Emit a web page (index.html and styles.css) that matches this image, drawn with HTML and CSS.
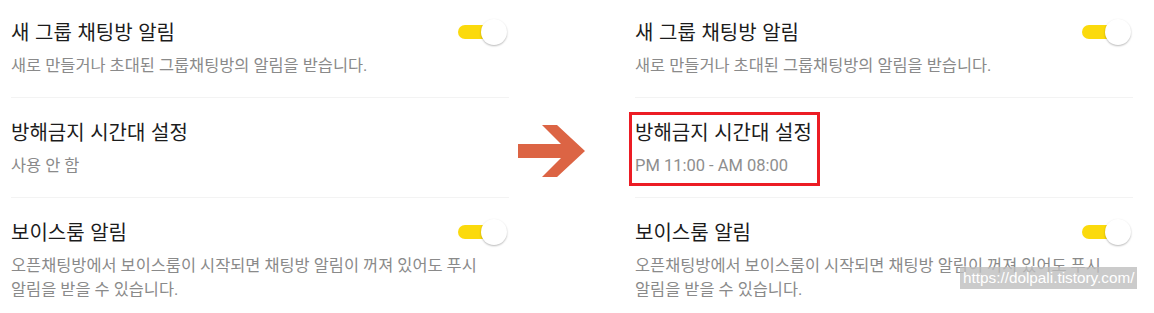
FILE: index.html
```
<!DOCTYPE html>
<html lang="ko">
<head>
    <meta charset="UTF-8">
    <meta name="viewport" content="width=device-width, initial-scale=1.0">
    <title>알림 설정</title>
    <link rel="stylesheet" href="styles.css">
</head>
<body>
    <div class="page">
        <!-- before -->
        <div class="panel">
            <div class="item">
                <div class="item-head">
                    <div class="item-title">새 그룹 채팅방 알림</div>
                    <div class="toggle"><span class="track"></span><span class="knob"></span></div>
                </div>
                <div class="item-desc">새로 만들거나 초대된 그룹채팅방의 알림을 받습니다.</div>
            </div>
            <div class="item">
                <div class="item-head">
                    <div class="item-title">방해금지 시간대 설정</div>
                </div>
                <div class="item-desc">사용 안 함</div>
            </div>
            <div class="item">
                <div class="item-head">
                    <div class="item-title">보이스룸 알림</div>
                    <div class="toggle"><span class="track"></span><span class="knob"></span></div>
                </div>
                <div class="item-desc">오픈채팅방에서 보이스룸이 시작되면 채팅방 알림이 꺼져 있어도 푸시<br>알림을 받을 수 있습니다.</div>
            </div>
        </div>

        <div class="arrow-col">
            <svg class="arrow" width="68" height="54" viewBox="0 0 68 54">
                <polygon fill="#dc6444" points="0,19 43,19 24,0 39,0 67,26 39,52 24,52 43,33 0,33"/>
            </svg>
        </div>

        <!-- after -->
        <div class="panel">
            <div class="item">
                <div class="item-head">
                    <div class="item-title">새 그룹 채팅방 알림</div>
                    <div class="toggle"><span class="track"></span><span class="knob"></span></div>
                </div>
                <div class="item-desc">새로 만들거나 초대된 그룹채팅방의 알림을 받습니다.</div>
            </div>
            <div class="item marked">
                <div class="item-head">
                    <div class="item-title">방해금지 시간대 설정</div>
                </div>
                <div class="item-desc">PM 11:00 - AM 08:00</div>
                <div class="highlight"></div>
            </div>
            <div class="item">
                <div class="item-head">
                    <div class="item-title">보이스룸 알림</div>
                    <div class="toggle"><span class="track"></span><span class="knob"></span></div>
                </div>
                <div class="item-desc">오픈채팅방에서 보이스룸이 시작되면 채팅방 알림이 꺼져 있어도 푸시<br>알림을 받을 수 있습니다.</div>
            </div>
        </div>
    </div>

    <div class="watermark">https://dolpali.tistory.com/</div>
</body>
</html>
```

FILE: styles.css
```
body {
    margin: 0;
    padding: 0;
    background-color: white;
    font-family: Roboto, 'Noto Sans CJK KR', sans-serif;
    overflow: hidden;
}
.page {
    display: flex;
    align-items: flex-start;
    padding-left: 11px;
}
.panel {
    width: 498px;
    flex-shrink: 0;
}
.item {
    position: relative;
    padding: 20px 0 19px;
    border-bottom: 1px solid #f3f3f3;
}
.item:first-child {
    padding-top: 18px;
}
.item:last-child {
    border-bottom: none;
}
.item-head {
    display: flex;
    justify-content: space-between;
    align-items: center;
    height: 28px;
}
.item-title {
    font-family: 'Noto Sans CJK KR', sans-serif;
    font-size: 20px;
    line-height: 28px;
    color: #1c1c1c;
}
.item-desc {
    margin-top: 8px;
    font-size: 16.4px;
    line-height: 24px;
    color: #8a8a8a;
}
.marked .item-desc {
    font-size: 16.5px;
    color: #8e8e8e;
}
.toggle {
    position: relative;
    width: 50px;
    height: 28px;
    margin-right: 1px;
}
.toggle .track {
    position: absolute;
    left: 0;
    top: 7px;
    width: 40px;
    height: 14px;
    border-radius: 7px;
    background-color: #fbda0c;
}
.toggle .knob {
    position: absolute;
    right: 1px;
    top: 1px;
    width: 26px;
    height: 26px;
    border-radius: 50%;
    background-color: white;
    box-shadow: 0 1px 2px rgba(0, 0, 0, 0.28);
}
.arrow-col {
    width: 126px;
    flex-shrink: 0;
    padding: 125px 0 0 9px;
    box-sizing: border-box;
}
.arrow {
    display: block;
}
.highlight {
    position: absolute;
    left: -6px;
    top: 14px;
    width: 191px;
    height: 74px;
    border: 3px solid #ec1c24;
    box-sizing: border-box;
}
.watermark {
    position: absolute;
    left: 960px;
    top: 267px;
    height: 22px;
    padding: 0 3px;
    background-color: rgba(190, 190, 190, 0.8);
    color: white;
    font-family: 'Liberation Sans', sans-serif;
    font-size: 15.3px;
    line-height: 22px;
    white-space: nowrap;
}
```
